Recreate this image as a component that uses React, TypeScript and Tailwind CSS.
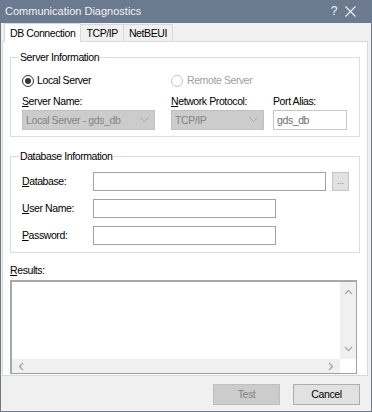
import React from "react";

const U = ({ c }: { c: string }) => <span className="underline underline-offset-[1px]">{c}</span>;

function Chevron({ dir, className }: { dir: "up" | "down" | "left" | "right"; className?: string }) {
  const d = {
    up: "M1 6 L4.5 2.5 L8 6",
    down: "M1 3 L4.5 6.5 L8 3",
    left: "M6 1 L2.5 4.5 L6 8",
    right: "M3 1 L6.5 4.5 L3 8",
  }[dir];
  return (
    <svg width="9" height="9" viewBox="0 0 9 9" className={className}>
      <path d={d} fill="none" stroke="currentColor" strokeWidth="1.3" />
    </svg>
  );
}

function Combo({ text, w }: { text: string; w: string }) {
  return (
    <div className={`${w} h-[20px] bg-[#cccccc] border border-[#bfbfbf] flex items-center pl-[3px] pr-[5px] text-[#838383]`}>
      <span className="flex-1 truncate">{text}</span>
      <svg width="9" height="6" viewBox="0 0 9 6" className="text-[#a6a6a6]">
        <path d="M0.5 0.5 L4.5 4.5 L8.5 0.5" fill="none" stroke="currentColor" strokeWidth="1" />
      </svg>
    </div>
  );
}

function TextBox({ w, value }: { w: string; value?: string }) {
  return (
    <div className={`${w} h-[19px] bg-white border border-[#a3a3a3] flex items-center pl-[3px] text-[#6d6d6d]`}>
      {value}
    </div>
  );
}

export default function App() {
  return (
    <div className="w-[372px] h-[412px] bg-[#6b7a8f] flex flex-col text-[10.5px] tracking-[-0.4px] leading-[13px] text-black font-['Liberation_Sans',Arial,sans-serif]">
      {/* title bar */}
      <div className="h-[23px] shrink-0 flex items-center pl-[5px] text-[#f4f4f4] text-[11px] tracking-normal">
        <span className="flex-1">Communication Diagnostics</span>
        <span className="w-[10px] text-center mr-[6px] text-[12px]">?</span>
        <svg width="11" height="11" viewBox="0 0 11 11" className="mr-[16px]">
          <path d="M0.5 0.5 L10.5 10.5 M10.5 0.5 L0.5 10.5" stroke="#f4f4f4" strokeWidth="1.1" />
        </svg>
      </div>

      <div className="flex-1 mx-px mb-px bg-[#f0f0f0] flex flex-col">
        {/* tabs */}
        <div className="h-[18px] shrink-0 flex items-end pl-[3px]">
          <div className="relative z-10 h-[19px] -mb-px px-[5px] bg-white border border-b-0 border-[#d9d9d9] flex items-center">
            DB Connection
          </div>
          <div className="h-[17px] px-[5px] border border-l-0 border-b-0 border-[#d9d9d9] flex items-center">TCP/IP</div>
          <div className="h-[17px] px-[5px] border border-l-0 border-b-0 border-[#d9d9d9] flex items-center">NetBEUI</div>
        </div>

        {/* tab page */}
        <div className="ml-px w-[366px] h-[335px] shrink-0 bg-white border border-[#d9d9d9] flex flex-col">
          {/* Server Information */}
          <fieldset className="mx-[7px] mt-[9px] h-[86px] shrink-0 min-w-0 border border-[#dcdcdc] flex flex-col">
            <legend className="ml-[8px] px-px">Server Information</legend>
            <div className="pl-[11px] flex flex-col">
              <div className="mt-[10px] h-[13px] flex items-center">
                <div className="w-[149px] flex items-center">
                  <span className="w-[12px] h-[12px] rounded-full border border-[#333333] flex items-center justify-center">
                    <span className="w-[6px] h-[6px] rounded-full bg-[#333333]" />
                  </span>
                  <span className="ml-[3px]">Local Server</span>
                </div>
                <div className="flex items-center text-[#a0a0a0]">
                  <span className="w-[12px] h-[12px] rounded-full border border-[#c4c4c4]" />
                  <span className="ml-[4px]">Remote Server</span>
                </div>
              </div>
              <div className="mt-[8px] flex">
                <div className="w-[149px] flex flex-col">
                  <span><U c="S" />erver Name:</span>
                  <div className="mt-[2px]"><Combo text="Local Server - gds_db" w="w-[133px]" /></div>
                </div>
                <div className="w-[102px] flex flex-col">
                  <span><U c="N" />etwork Protocol:</span>
                  <div className="mt-[2px]"><Combo text="TCP/IP" w="w-[93px]" /></div>
                </div>
                <div className="flex flex-col">
                  <span>Port Alias:</span>
                  <div className="mt-[2px] w-[74px] h-[20px] border border-[#c8c8c8] bg-white flex items-center pl-[3px] text-[#6d6d6d]">
                    gds_db
                  </div>
                </div>
              </div>
            </div>
          </fieldset>

          {/* Database Information */}
          <fieldset className="mx-[7px] mt-[13px] h-[103px] shrink-0 min-w-0 border border-[#dcdcdc] flex flex-col">
            <legend className="ml-[8px] px-px">Database Information</legend>
            <div className="pl-[11px] flex flex-col">
              <div className="mt-[9px] flex items-center">
                <span className="w-[71px]"><U c="D" />atabase:</span>
                <TextBox w="w-[233px]" />
                <div className="ml-[6px] w-[17px] h-[19px] bg-[#e1e1e1] border border-[#c4c4c4] flex items-end justify-center pb-[4px] text-[#8a8a8a] text-[9px] leading-[9px]">
                  ...
                </div>
              </div>
              <div className="mt-[8px] flex items-center">
                <span className="w-[71px]"><U c="U" />ser Name:</span>
                <TextBox w="w-[183px]" />
              </div>
              <div className="mt-[8px] flex items-center">
                <span className="w-[71px]"><U c="P" />assword:</span>
                <TextBox w="w-[183px]" />
              </div>
            </div>
          </fieldset>

          {/* Results */}
          <div className="ml-[7px] mt-[11px] shrink-0"><U c="R" />esults:</div>
          <div className="ml-[7px] mt-[3px] w-[347px] h-[94px] shrink-0 border border-[#a0a0a0] border-t-2 border-l-2 border-t-[#a8a8a8] border-l-[#a8a8a8] flex flex-col">
            <div className="flex-1 flex">
              <div className="flex-1" />
              <div className="w-[16px] bg-[#f0f0f0] flex flex-col items-center justify-between py-[6px] text-[#a8a8a8]">
                <Chevron dir="up" />
                <Chevron dir="down" />
              </div>
            </div>
            <div className="h-[14px] shrink-0 flex">
              <div className="flex-1 bg-[#f0f0f0] flex items-center justify-between px-[5px] text-[#a0a0a0]">
                <Chevron dir="left" />
                <Chevron dir="right" />
              </div>
              <div className="w-[16px]" />
            </div>
          </div>
        </div>

        {/* buttons */}
        <div className="flex-1 flex justify-end items-start pt-[8px] pr-[11px] gap-[13px]">
          <div className="w-[67px] h-[21px] bg-[#cccccc] border border-[#bfbfbf] flex items-center justify-center text-[#838383]">
            Test
          </div>
          <div className="w-[67px] h-[21px] bg-[#e1e1e1] border border-[#adadad] flex items-center justify-center">
            Cancel
          </div>
        </div>
      </div>
    </div>
  );
}
